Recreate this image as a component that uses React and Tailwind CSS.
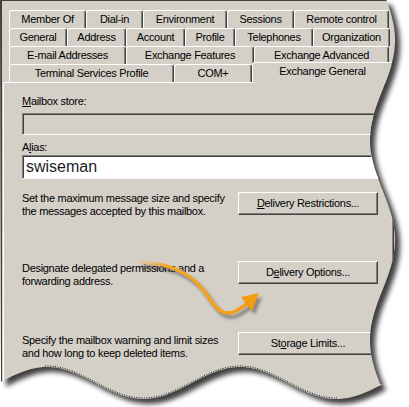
import React from "react";

// wavy "torn" outline of the screenshot, shared by the clip and the shadow
const rightEdge = (y) => 382.5 + 12.5 * Math.cos((2 * Math.PI * (y - 40)) / 200);
const bottomEdge = (x) => 383 - 16 * Math.cos((2 * Math.PI * (x - 47)) / 193);

function tearPath() {
  let d = `M0,0 L${rightEdge(0).toFixed(1)},0`;
  for (let y = 0; y <= 386; y += 3) d += ` L${rightEdge(y).toFixed(1)},${y}`;
  for (let x = 382; x >= 0; x -= 3) d += ` L${x},${bottomEdge(x).toFixed(1)}`;
  return d + " Z";
}

function dottedPath() {
  let d = "";
  for (let x = 45; x <= 338; x += 2) d += `${d ? " L" : "M"}${x},${(bottomEdge(x) - 1).toFixed(1)}`;
  return d;
}

const TEAR = tearPath();

const rows = [
  [
    ["Member Of", "w-[77px]"],
    ["Dial-in", "w-[57px]"],
    ["Environment", "w-[84px]"],
    ["Sessions", "w-[67px]"],
    ["Remote control", "w-[95px]"],
  ],
  [
    ["General", "w-[58px]"],
    ["Address", "w-[59px]"],
    ["Account", "w-[59px]"],
    ["Profile", "w-[50px]"],
    ["Telephones", "w-[78px]"],
    ["Organization", "w-[77px]"],
  ],
  [
    ["E-mail Addresses", "w-[117px]"],
    ["Exchange Features", "w-[128px]"],
    ["Exchange Advanced", "w-[135px]"],
  ],
];

const tabBase =
  "flex h-[18px] items-center justify-center rounded-t-[3px] border-t border-l border-r border-t-white border-l-white border-r-[#404040] bg-[#d4d0c8] shadow-[inset_-1px_0_0_#808080]";

function Tab({ label, w }) {
  return <div className={`${tabBase} ${w}`}>{label}</div>;
}

function Button({ children }) {
  return (
    <div className="flex h-[23px] w-[140px] shrink-0 items-center justify-center border border-t-white border-l-white border-r-[#404040] border-b-[#404040] shadow-[inset_-1px_-1px_0_#808080]">
      {children}
    </div>
  );
}

const u = "underline underline-offset-[1px]";

function Field({ white, children }) {
  return (
    <div
      className={`flex items-center border border-t-[#808080] border-l-[#808080] border-r-white border-b-white pl-[3px] shadow-[inset_1px_1px_0_#404040] ${
        white ? "h-[24px] bg-white" : "h-[22px] bg-[#d4d0c8]"
      }`}
    >
      {children}
    </div>
  );
}

export default function App() {
  return (
    <div className="relative h-[407px] w-[409px] overflow-hidden bg-white font-['Liberation_Sans',Arial,sans-serif] text-[11px] leading-[13px] tracking-[-0.3px] text-black">
      <svg className="absolute inset-0" width="409" height="407">
        <defs>
          <clipPath id="tear" clipPathUnits="userSpaceOnUse">
            <path d={TEAR} />
          </clipPath>
          <filter id="soft" x="-10%" y="-10%" width="120%" height="120%">
            <feGaussianBlur stdDeviation="2.8" />
          </filter>
        </defs>
        <path d={TEAR} transform="translate(5,5)" fill="#000" opacity="0.75" filter="url(#soft)" />
      </svg>

      <div className="relative h-full w-full border-t border-l-2 border-[#404040] bg-[#d4d0c8] [clip-path:url(#tear)]">
        {/* tab rows */}
        <div className="flex flex-col pt-[9px] pl-[7px]">
          {rows.map((row, i) => (
            <div key={i} className="flex">
              {row.map(([label, w]) => (
                <Tab key={label} label={label} w={w} />
              ))}
            </div>
          ))}
          <div className="flex">
            <Tab label="Terminal Services Profile" w="w-[165px]" />
            <Tab label="COM+" w="w-[78px]" />
            <div className="relative z-10 -mt-[2px] -mb-[1px] flex h-[21px] w-[141px] justify-center rounded-t-[3px] border-t border-l border-r border-t-white border-l-white border-r-[#404040] bg-[#d4d0c8] pt-[2px] shadow-[inset_-1px_0_0_#808080]">
              Exchange General
            </div>
          </div>
        </div>

        {/* tab page */}
        <div className="ml-[1px] h-[330px] w-[391px] border-t border-l border-r border-t-white border-l-white border-r-[#404040] pt-[12px] pr-[15px] pl-[18px] shadow-[inset_-1px_0_0_#808080]">
          <div>
            <span className={u}>M</span>ailbox store:
          </div>
          <div className="mt-[5px]">
            <Field />
          </div>
          <div className="mt-[6px]">
            A<span className={u}>l</span>ias:
          </div>
          <div className="mt-[1px]">
            <Field white>
              <span className="text-[16px] leading-[18px] tracking-normal text-[#1c1c24]">swiseman</span>
            </Field>
          </div>

          <div className="mt-[13px] flex items-start justify-between">
            <div>
              Set the maximum message size and specify
              <br />
              the messages accepted by this mailbox.
            </div>
            <Button>
              <span className={u}>D</span>elivery Restrictions...
            </Button>
          </div>

          <div className="mt-[43px] flex items-start justify-between">
            <div className="pt-[1px]">
              Designate delegated permissions and a
              <br />
              forwarding address.
            </div>
            <Button>
              D<span className={u}>e</span>livery Options...
            </Button>
          </div>

          <div className="mt-[44px] flex items-start justify-between">
            <div className="pt-[2px]">
              Specify the mailbox warning and limit sizes
              <br />
              and how long to keep deleted items.
            </div>
            <Button>
              St<span className={u}>o</span>rage Limits...
            </Button>
          </div>
        </div>
      </div>

      {/* overlay: dotted tear line and the orange callout arrow */}
      <svg className="pointer-events-none absolute inset-0" width="409" height="407">
        <defs>
          <linearGradient id="orange" x1="137" y1="0" x2="260" y2="0" gradientUnits="userSpaceOnUse">
            <stop offset="0" stopColor="#f9c46a" stopOpacity="0.2" />
            <stop offset="0.25" stopColor="#f6a623" stopOpacity="1" />
            <stop offset="1" stopColor="#f39c12" />
          </linearGradient>
          <filter id="ashadow" x="-20%" y="-20%" width="140%" height="140%">
            <feGaussianBlur stdDeviation="1.5" />
          </filter>
        </defs>
        <path d={dottedPath()} fill="none" stroke="#111" strokeWidth="1" strokeDasharray="1 1.5" />
        <g transform="translate(3,4)" opacity="0.45" filter="url(#ashadow)">
          <path d="M140,263 C168,262 191,273 205,292 C215,307 222,318 236,311 L247,304" fill="none" stroke="#333" strokeWidth="4" strokeLinecap="round" />
          <path d="M259,293 L241,297 L252,311 Z" fill="#333" />
        </g>
        <path d="M140,263 C168,262 191,273 205,292 C215,307 222,318 236,311 L247,304" fill="none" stroke="url(#orange)" strokeWidth="3.5" strokeLinecap="round" />
        <path d="M259,293 L241,297 L252,311 Z" fill="#f39c12" />
      </svg>
    </div>
  );
}
